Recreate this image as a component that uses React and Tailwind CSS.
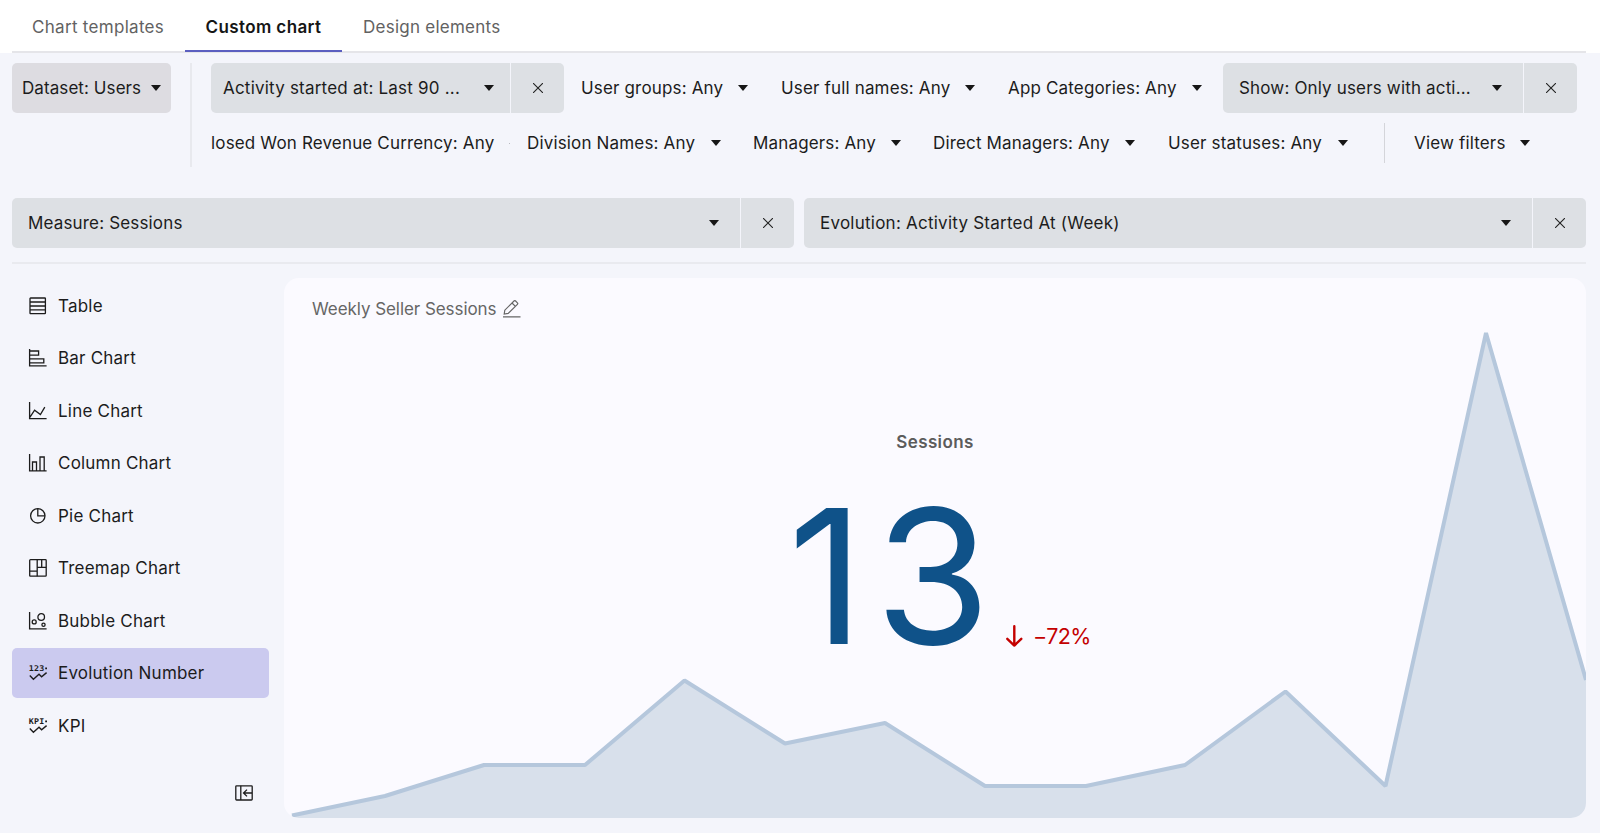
import React from "react";

const Caret = ({ className = "" }) => (
  <svg className={"shrink-0 " + className} width="10" height="6" viewBox="0 0 10 6">
    <path d="M0 0h10L5 6z" fill="#161616" />
  </svg>
);

const Close = () => (
  <svg width="10" height="10" viewBox="0 0 10 10" fill="none" stroke="#222" strokeWidth="1.1">
    <path d="M0 0l10 10M10 0L0 10" />
  </svg>
);

function Chip({ label, className = "", pad = "pl-4 pr-[21px]" }) {
  return (
    <div className={"flex h-[50px] gap-px " + className}>
      <div className={"flex flex-1 items-center justify-between rounded-l-[5px] bg-[#dde0e4] " + pad}>
        <span>{label}</span>
        <Caret />
      </div>
      <div className="flex w-[53px] items-center justify-center rounded-r-[5px] bg-[#dde0e4]">
        <Close />
      </div>
    </div>
  );
}

function Filter({ label, className }) {
  return (
    <div className={"flex h-[50px] shrink-0 items-center justify-between " + className}>
      <span>{label}</span>
      <Caret />
    </div>
  );
}

const MiniLabel = ({ children }) => (
  <>
    <text x="-0.3" y="7" fontSize="7.8" fontWeight="700" fontFamily="DejaVu Sans Mono, monospace" textLength="15.8" lengthAdjust="spacingAndGlyphs" fill="#1c1c1c" stroke="none">
      {children}
    </text>
    <path d="M16.200 4.400h1.800" strokeWidth="1.800" />
    <path d="M.8 11.600l3.600 3.600 5.600-5 2.600 2.600 5-4.200" strokeWidth="1.400" />
  </>
);

const items = [
  ["Table", <><rect x="1" y="1" width="15.4" height="15.6" rx=".6" /><path d="M1 5h15.4M1 9h15.4M1 12.8h15.4" /></>],
  ["Bar Chart", <><path d="M.6 0v16.9h17M.6 2h9v4.2h-9M.6 9.8h14.2v4h-14.2" /></>],
  ["Line Chart", <><path d="M.6 0v16.6h17M1 15.2l4.6-7 5.8 4.4 4.4-7.4" /></>],
  ["Column Chart", <><path d="M.6 0v16.8h17M3.5 16.6V8h4v8.600M11 16.600V3h4.200v13.600" /></>],
  ["Pie Chart", <><circle cx="8.800" cy="8.800" r="7.200" /><path d="M8.800 1.600v7.200h7.200" /></>],
  ["Treemap Chart", <><rect x=".7" y=".7" width="16.500" height="16.500" rx=".8" /><path d="M8.200.7v16.500M8.200 8.300h9M12.700.7v7.600M.7 12.100h7.500" /></>],
  ["Bubble Chart", <><path d="M.6 0v16.800h17" /><circle cx="12.200" cy="5" r="3.300" /><circle cx="5.200" cy="9.900" r="2" /><circle cx="14.500" cy="12.800" r="1.600" /></>],
  ["Evolution Number", <MiniLabel>123</MiniLabel>],
  ["KPI", <MiniLabel>KPI</MiniLabel>],
];

const line = "M8 537.500L101 518L200 487H301L400.500 402.500L501 465.500L601 445L701 508H802L901 487L1001.500 413.500L1101.500 508L1202 55L1302 402";

export default function App() {
  return (
    <div className="flex h-[833px] w-[1600px] flex-col overflow-hidden bg-[#f4f5fb] font-['Inter',sans-serif] text-[17px] leading-6 tracking-[0.16px] text-[#1c1c1c] whitespace-nowrap">
      <header className="h-[53px] shrink-0 bg-white pr-[14px] pl-3">
        <nav className="flex h-[53px] border-b-2 border-[#e5e5e9] text-[#626262]">
          <div className="flex w-[173px] items-center pt-[3px] pl-5 tracking-[0.3px]"><span>Chart templates</span></div>
          <div className="flex h-[52px] w-[157px] items-center justify-center border-b-2 border-[#5b5fc0] pt-[3px] font-semibold tracking-[0.4px] text-[#151515]">Custom chart</div>
          <div className="flex w-[180px] items-center pt-[3px] pl-[21px] tracking-[0.250px]"><span>Design elements</span></div>
        </nav>
      </header>

      <section className="flex h-[144px] shrink-0 pt-[10px] pl-3">
        <div className="flex h-[50px] w-[158.500px] items-center justify-between rounded-[5px] bg-[#dddce1] px-[10px]">
          <span className="tracking-[0.080px]">Dataset: Users</span>
          <Caret />
        </div>
        <div className="ml-[19.500px] h-[104px] w-[2px] bg-[#e8e9ee]" />
        <div className="ml-[19px] flex flex-col gap-[5px]">
          <div className="flex">
            <Chip label={<span className="tracking-[0.210px]">Activity started at: Last 90 ...</span>} className="w-[353px]" pad="pl-3 pr-4" />
            <Filter label="User groups: Any" className="ml-[17px] w-[167px]" />
            <Filter label="User full names: Any" className="ml-[33px] w-[194px]" />
            <Filter label="App Categories: Any" className="ml-[33px] w-[194px]" />
            <Chip label="Show: Only users with acti..." className="ml-[21px] w-[354px]" />
          </div>
          <div className="flex items-center">
            <div className="flex w-[316px] items-center">
              <span className="w-[298px]">losed Won Revenue Currency: Any</span>
              <span className="size-px bg-[#b9bac0]" />
            </div>
            <Filter label="Division Names: Any" className="w-[194px]" />
            <Filter label="Managers: Any" className="ml-[32px] w-[147.500px]" />
            <Filter label="Direct Managers: Any" className="ml-[32.500px] w-[202px]" />
            <Filter label="User statuses: Any" className="ml-[33px] w-[179.500px]" />
            <div className="ml-[36.500px] h-10 w-px bg-[#d4d5da]" />
            <Filter label="View filters" className="ml-[29px] w-[116px]" />
          </div>
        </div>
      </section>

      <section className="mr-[14px] ml-3 flex h-[67px] shrink-0 gap-[10px] border-b-2 border-[#e9eaef] pt-[1px]">
        <Chip label="Measure: Sessions" className="w-[782px]" />
        <Chip label={<span className="tracking-[0.240px]">Evolution: Activity Started At (Week)</span>} className="w-[782px]" />
      </section>

      <main className="flex flex-1 pl-3">
        <aside className="flex w-[257px] flex-col gap-[2.5px] pt-[16.500px]">
          {items.map(([label, icon]) => (
            <div key={label} className={"flex h-[50px] shrink-0 items-center gap-[11px] rounded-[5px] pl-[17px] tracking-[0.210px] " + (label === "Evolution Number" ? "bg-[#cbcaef]" : "")}>
              <svg className="shrink-0 overflow-visible" width="18" height="18" viewBox="0 0 18 18" fill="none" stroke="#1c1c1c" strokeWidth="1.3">{icon}</svg>
              <span>{label}</span>
            </div>
          ))}
          <svg className="mt-[32px] mr-4 self-end" width="18" height="16" viewBox="0 0 18 16" fill="none" stroke="#1c1c1c" strokeWidth="1.300">
            <rect x=".8" y=".8" width="16.400" height="14.200" rx=".8" />
            <path d="M5.800.8v14.200M17 8H8.500M12 4.600L8.500 8l3.500 3.400" />
          </svg>
        </aside>

        <article className="relative mt-[14px] ml-[15px] h-[540px] w-[1302px] overflow-hidden rounded-[15px] bg-[#fbfaff]">
          <svg className="absolute inset-0" width="1302" height="540" viewBox="0 0 1302 540">
            <path d={line + "V540H0z"} fill="#d8e0eb" />
            <path d={line} fill="none" stroke="#b5c7dc" strokeWidth="4" strokeLinejoin="bevel" />
          </svg>
          <div className="relative flex h-full flex-col">
            <div className="flex items-center gap-[6px] pt-[19px] pl-7 text-[#666]">
              <span className="tracking-[-0.060px]">Weekly Seller Sessions</span>
              <svg width="18" height="18" viewBox="0 0 18 18" fill="none" stroke="#666" strokeWidth="1.200">
                <path d="M0 16.900h17.500M1.200 14l.6-3.800L11 1q.8-.8 1.600 0l1.800 1.800q.8.800 0 1.600L5.200 13.400zM9 3l3.400 3.400" />
              </svg>
            </div>
            <div className="mt-[109px] flex justify-center font-semibold tracking-[0.400px] text-[#5c5c5c]">Sessions</div>
            <div className="mt-[2px] flex items-baseline pl-[504px]">
              <span className="w-[202px] text-[187px] leading-[240px] tracking-[11px] text-[#0f5289]">13</span>
              <svg className="ml-[16px] translate-y-[3px]" width="17" height="22" viewBox="0 0 17 22" fill="none" stroke="#c40000" strokeWidth="2.400" strokeLinecap="round" strokeLinejoin="round">
                <path d="M8.300 1.200v19.300M1.300 13.800l7 6.800 7-6.800" />
              </svg>
              <span className="ml-[10px] text-[21.500px] tracking-[-0.600px] text-[#c40000]">−72%</span>
            </div>
          </div>
        </article>
      </main>
    </div>
  );
}
